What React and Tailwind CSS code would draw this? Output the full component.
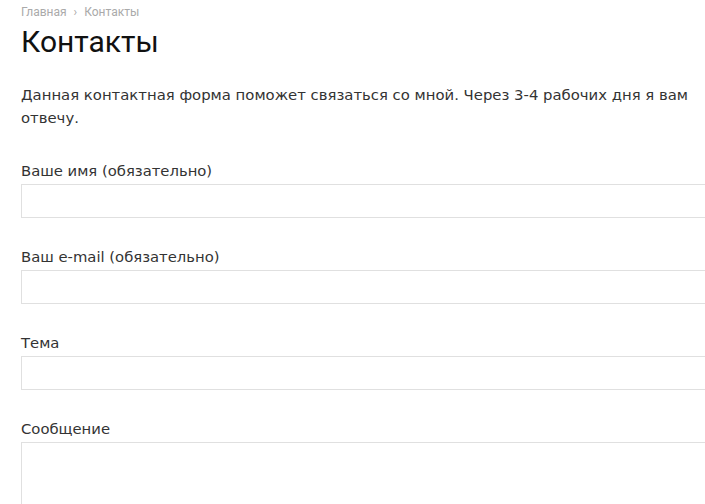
import React from 'react';

const Field = ({ label, tall }) => (
  <div className="mb-[28px]">
    <div className="text-[14.8px] leading-[22px] text-[#333]">{label}</div>
    {tall ? (
      <textarea className="block w-[720px] h-[140px] mt-[2px] border border-[#e0e0e0] bg-white resize-none" />
    ) : (
      <input className="block w-[720px] h-[34px] mt-[2px] border border-[#e0e0e0] bg-white" />
    )}
  </div>
);

export default function App() {
  return (
    <div className="h-[504px] overflow-hidden bg-white pl-[21px] pr-[4px]" style={{ fontFamily: '"DejaVu Sans", Verdana, sans-serif' }}>
      <div className="pt-[4px] text-[12px] leading-[16px] text-[#aaa] font-['Roboto',sans-serif]">
        Главная <span className="mx-[4px]">›</span> Контакты
      </div>
      <h1 className="mt-[2px] text-[30px] leading-[40px] text-[#111] font-['Roboto',sans-serif]">Контакты</h1>
      <p className="mt-[22px] mb-[30px] text-[14.85px] leading-[23px] text-[#333]">
        Данная контактная форма поможет связаться со мной. Через 3-4 рабочих дня я вам отвечу.
      </p>
      <Field label="Ваше имя (обязательно)" />
      <Field label="Ваш e-mail (обязательно)" />
      <Field label="Тема" />
      <Field label="Сообщение" tall />
    </div>
  );
}
